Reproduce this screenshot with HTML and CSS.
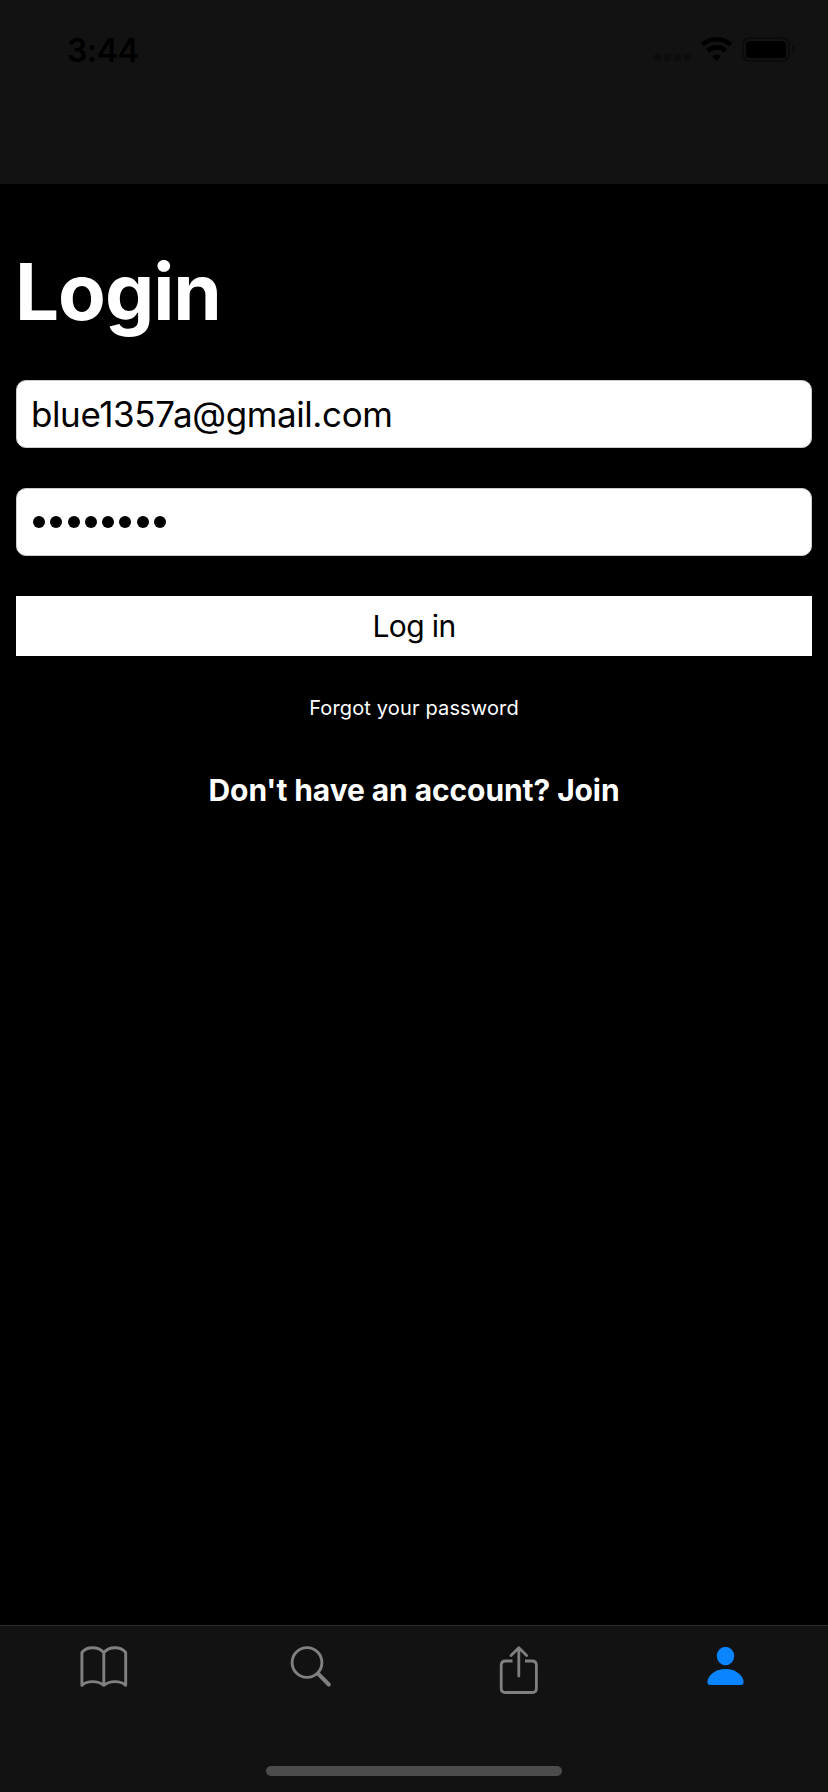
FILE: index.html
```html
<!DOCTYPE html>
<html lang="en">
<head>
<meta charset="utf-8">
<title>Login</title>
<link rel="stylesheet" href="styles.css">
</head>
<body>
<div class="screen">
  <header class="header">
    <span class="time">3:44</span>
    <svg class="status" width="144" height="28" viewBox="0 0 144 28">
      <g fill="#0d0d0d"><rect x="3" y="18" width="7" height="7" rx="2"/><rect x="13" y="18" width="7" height="7" rx="2"/><rect x="23" y="18" width="7" height="7" rx="2"/><rect x="33" y="18" width="7" height="7" rx="2"/></g>
      <g fill="none" stroke="#000" stroke-width="4.6"><path d="M51.3 8.800a21 21 0 0 1 28.400 0"/><path d="M56.500 14.800a13.400 13.400 0 0 1 18 0"/></g>
      <path d="M61 20.300q4.500-3.800 9 0L65.500 25z"/>
      <rect x="92" y="2" width="46" height="23" rx="7" fill="none" stroke="#0b0b0b" stroke-width="2"/>
      <rect x="95" y="5" width="40" height="17" rx="4"/>
      <path d="M141 9.500q3 1.200 3 4t-3 4z" fill="#0b0b0b"/>
    </svg>
  </header>
  <main class="content">
    <h1 class="title">Login</h1>
    <div class="field email"><span>blue1357a@gmail.com</span></div>
    <div class="field password" role="img" aria-label="Password, 8 characters">
      <i class="dot"></i><i class="dot"></i><i class="dot"></i><i class="dot"></i><i class="dot"></i><i class="dot"></i><i class="dot"></i><i class="dot"></i>
    </div>
    <button class="submit"><span>Log in</span></button>
    <a class="forgot">Forgot your password</a>
    <a class="join">Don't have an account? Join</a>
  </main>
  <nav class="tabs">
    <div class="tab-row">
      <a class="tab"><svg width="48" height="52" viewBox="0 0 48 52" fill="none" stroke="#808080" stroke-width="2.900" stroke-linejoin="round" stroke-linecap="round"><path d="M1.900 10.500C7 4.200 18 4.200 23.800 10.500C29.500 4.200 40.500 4.200 45.700 10.500V43.300C40 38.400 30 38.400 23.800 43.300C17.500 38.400 7.500 38.400 1.900 43.300ZM23.800 10.500V43.300"/></svg></a>
      <a class="tab"><svg width="42" height="52" viewBox="0 0 42 52" fill="none" stroke="#808080" stroke-linecap="round"><circle cx="17" cy="20.500" r="14.900" stroke-width="2.900"/><path d="M28.500 32.200L38.800 42.500" stroke-width="4"/></svg></a>
      <a class="tab"><svg width="40" height="52" viewBox="0 0 40 52" fill="none" stroke="#808080" stroke-width="2.800"><path d="M14.500 19H7.500Q3.200 19 3.200 23.300V46.200Q3.200 50.500 7.500 50.500H34.100Q38.400 50.500 38.400 46.200V23.300Q38.400 19 34.100 19H27"/><path d="M20.800 34V6.200M13 13.500L20.800 5.800L28.600 13.500" stroke-linecap="round" stroke-linejoin="round"/></svg></a>
      <a class="tab"><svg width="38" height="52" viewBox="0 0 38 52" fill="#0a84ff"><ellipse cx="19.500" cy="14" rx="8.700" ry="9.300"/><path d="M4 43Q1.400 43 1.400 40C1.400 34.500 8 27 19.500 27S37.600 34.500 37.600 40Q37.600 43 35 43Z"/></svg></a>
    </div>
    <div class="home-indicator"></div>
  </nav>
</div>
</body>
</html>
```
FILE: styles.css
```css
* { box-sizing: border-box; }
body { margin: 0; background: #000; font-family: Inter, "Liberation Sans", sans-serif; }
.screen { width: 828px; height: 1792px; display: flex; flex-direction: column; background: #000; color: #fff; }
.header { height: 184px; padding: 36px 33px 0 67px; background: #121212; display: flex; align-items: flex-start; justify-content: space-between; }
.time { color: #000; font-size: 32px; line-height: 29px; font-weight: 600; letter-spacing: -0.4px; }
.status { display: block; }
.content { flex: 1; padding: 63px 16px 0; display: flex; flex-direction: column; }
.title { margin: 0 0 43px -1px; font-size: 78px; line-height: 90px; font-weight: 700; letter-spacing: -1px; }
.field { height: 68px; margin-bottom: 40px; padding: 0 14px; background: #fff; border: 1px solid #ccc; border-radius: 10px; color: #000; display: flex; align-items: center; }
.email { font-size: 35px; line-height: 42px; letter-spacing: -0.4px; }
.password { gap: 5.3px; padding-left: 16px; }
.dot { width: 12px; height: 12px; border-radius: 50%; background: #000; }
.submit { height: 60px; padding: 0; border: 0; border-radius: 0; background: #fff; color: #000; font: 400 30px/36px Inter, "Liberation Sans", sans-serif; letter-spacing: -0.6px; }
.forgot { margin-top: 40px; text-align: center; font-size: 20px; line-height: 24px; letter-spacing: 0.15px; }
.join { margin-top: 50px; text-align: center; font-size: 30px; line-height: 40px; font-weight: 700; letter-spacing: -0.1px; }
.tabs { height: 167px; background: #121212; border-top: 1px solid #2b2b2b; display: flex; flex-direction: column; align-items: center; }
.tab-row { width: 100%; height: 140px; padding-top: 16px; display: grid; grid-template-columns: repeat(4, 1fr); }
.tab { display: flex; justify-content: center; align-items: flex-start; }
.home-indicator { width: 296px; height: 10px; border-radius: 5px; background: #4c4c4c; }
```
